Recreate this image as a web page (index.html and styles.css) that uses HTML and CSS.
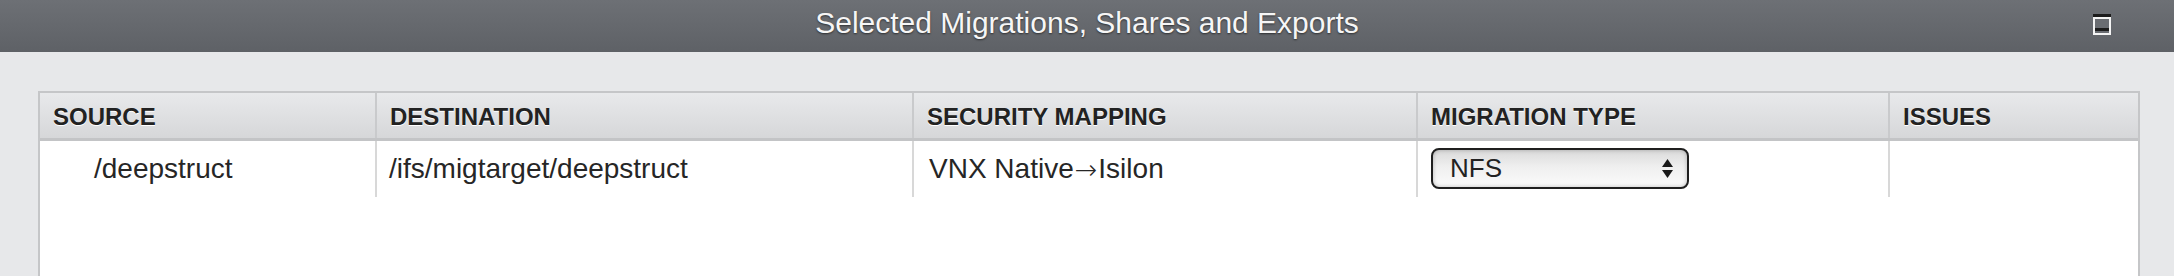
FILE: index.html
```html
<!DOCTYPE html>
<html lang="en">
<head>
    <meta charset="UTF-8">
    <meta name="viewport" content="width=device-width, initial-scale=1.0">
    <title>Selected Migrations, Shares and Exports</title>
    <link rel="stylesheet" href="styles.css">
</head>
<body>
    <div class="titlebar">
        <span></span>
        <h1 class="title">Selected Migrations, Shares and Exports</h1>
        <button class="maximize" title="Maximize">
            <svg width="18" height="21" viewBox="0 0 18 21">
                <rect x="0" y="0" width="18" height="3" fill="#1c1c1c"/>
                <rect x="1" y="4" width="16" height="16" fill="#6a6d72" stroke="#f4f4f4" stroke-width="2"/>
                <rect x="2" y="14" width="14" height="3" fill="#1c1c1c"/>
            </svg>
        </button>
    </div>

    <div class="content">
        <div class="grid">
            <div class="grid-row grid-head">
                <div class="cell">SOURCE</div>
                <div class="cell">DESTINATION</div>
                <div class="cell">SECURITY MAPPING</div>
                <div class="cell">MIGRATION TYPE</div>
                <div class="cell">ISSUES</div>
            </div>
            <div class="grid-body">
                <div class="grid-row">
                    <div class="cell source">/deepstruct</div>
                    <div class="cell">/ifs/migtarget/deepstruct</div>
                    <div class="cell security">VNX Native<span class="arrow">&rarr;</span>Isilon</div>
                    <div class="cell">
                        <div class="select-box">
                            <span>NFS</span>
                            <svg width="11" height="20" viewBox="0 0 11 20">
                                <polygon points="5.5,0 11,8 0,8" fill="#1a1a1a"/>
                                <polygon points="0,11 11,11 5.5,19" fill="#1a1a1a"/>
                            </svg>
                        </div>
                    </div>
                    <div class="cell"></div>
                </div>
            </div>
        </div>
    </div>
</body>
</html>
```

FILE: styles.css
```css
body {
    margin: 0;
    font-family: "Liberation Sans", Arial, sans-serif;
    background: #e7e8ea;
    color: #222;
    overflow: hidden;
}
.titlebar {
    height: 52px;
    display: grid;
    grid-template-columns: 1fr auto 1fr;
    align-items: start;
    background: linear-gradient(to bottom, #6d7075, #5e6166);
}
.title {
    margin: 0;
    font-size: 30px;
    font-weight: normal;
    line-height: 45px;
    color: #f6f6f6;
    text-shadow: 0 1px 2px rgba(0, 0, 0, 0.55);
}
.maximize {
    justify-self: end;
    margin: 14px 63px 0 0;
    padding: 0;
    border: none;
    background: none;
    line-height: 0;
    cursor: pointer;
}
.content {
    padding: 39px 34px 0 38px;
}
.grid {
    height: 200px;
    background: #fff;
    border: 2px solid #c5c6c8;
    border-bottom: none;
}
.grid-row {
    display: grid;
    grid-template-columns: 335px 537px 504px 472px 249px;
}
.grid-head {
    height: 45px;
    border-bottom: 3px solid #c3c4c6;
    background: linear-gradient(to bottom, #e8e9eb, #d6d7d9);
}
.grid-head .cell {
    padding: 3px 0 0 13px;
    font-size: 24px;
    font-weight: bold;
    line-height: 41px;
    color: #222;
    text-shadow: 0 1px 0 #fff;
    border-left: 2px solid #c9cacc;
}
.grid-head .cell:first-child {
    border-left: none;
}
.grid-body .grid-row {
    height: 56px;
}
.grid-body .cell {
    display: flex;
    align-items: center;
    padding-left: 12px;
    font-size: 28px;
    color: #262626;
    border-left: 2px solid #d8d8d8;
}
.grid-body .cell:first-child {
    border-left: none;
}
.grid-body .cell.source {
    padding-left: 54px;
}
.grid-body .cell.security {
    padding-left: 15px;
}
/* Liberation's arrow is tiny, DejaVu's is closer to the original */
.arrow {
    font-family: "DejaVu Sans", sans-serif;
    font-weight: 200;
    font-size: 27px;
    margin: 0 1px;
}
.grid-body .cell:nth-child(4) {
    padding-left: 13px;
}
.select-box {
    box-sizing: border-box;
    width: 258px;
    height: 41px;
    margin-top: -1px;
    display: flex;
    align-items: center;
    justify-content: space-between;
    padding: 0 14px 0 17px;
    border: 2px solid #1f1f1f;
    border-radius: 8px;
    background: linear-gradient(to bottom, #dadada, #efefef 45%, #fbfbfb);
    box-shadow: inset 0 0 4px rgba(0, 0, 0, 0.25);
    font-size: 26px;
    color: #222;
}
```
